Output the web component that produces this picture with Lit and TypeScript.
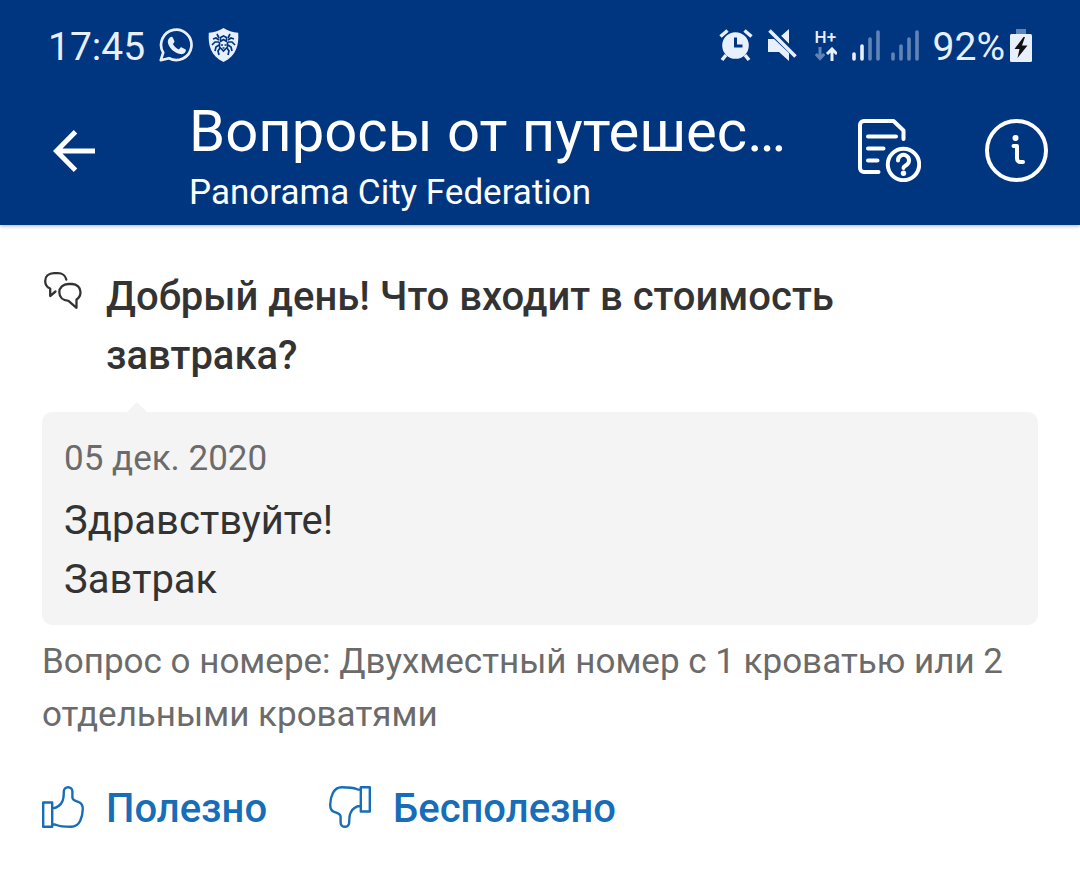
import { LitElement, html, css, svg } from "lit";
import { customElement, property, state } from "lit/decorators.js";
import { classMap } from "lit/directives/class-map.js";

@customElement("status-bar")
class StatusBar extends LitElement {
  static styles = css`
    :host {
      display: flex;
      justify-content: space-between;
      align-items: center;
      height: 90px;
      padding: 0 48px;
      box-sizing: border-box;
      color: #e8f0ff;
      font-size: 39px;
      line-height: 46px;
    }
    .group {
      display: flex;
      align-items: center;
    }
    .group span {
      padding-top: 4px;
    }
    svg {
      display: block;
      flex: none;
    }
    .left {
      gap: 14px;
    }
    .network {
      width: 24px;
      margin: 0 13px 0 17px;
      font-size: 17px;
      font-weight: 500;
      line-height: 15px;
    }
    .network svg {
      margin-top: 2px;
    }
    .mute {
      margin-left: 15px;
    }
    .signal {
      margin-right: 11px;
    }
    .level {
      margin: 0 5px 0 3px;
    }
  `;

  private bars(active: number) {
    const tops = [23, 15, 8, 1];
    return svg`${tops.map(
      (y, i) =>
        svg`<line x1=${2 + i * 8} x2=${2 + i * 8} y1=${y + 1} y2="29" stroke="currentColor" stroke-width="3.6" stroke-linecap="round" opacity=${i < active ? 1 : 0.42} />`
    )}`;
  }

  render() {
    return html`
      <div class="group left">
        <span>17:45</span>
        <svg width="35" height="34" viewBox="0 0 35 34" fill="none">
          <path d="M1.8 32.2 4.2 24.6A15.2 15.2 0 1 1 10 30.2Z" stroke="currentColor" stroke-width="2.7" stroke-linejoin="round" />
          <path d="M11.2 9.3c.8-.8 2-.8 2.5.1l1.7 3.6c.3.8-.1 1.4-1.5 2.9 1.4 2.6 3.4 4.4 6 5.5 1.6-1.9 2-2.4 2.9-2l3.5 1.8c.7.4.7 1.2.3 2.2-.9 2.2-3.2 3.1-5.3 2.7-6.3-1.2-11.2-6-12.4-11.3-.4-2.1.5-4 2.3-5.5Z" fill="currentColor" />
        </svg>
        <svg width="31" height="34" viewBox="0 0 31 34">
          <path d="M15.500 0c4 2.700 9 4.200 14.700 4.700C31 17 28.500 27.500 15.500 34 2.500 27.500 0 17 .8 4.700 6.500 4.200 11.500 2.700 15.500 0Z" fill="currentColor" />
          <g fill="none" stroke="#003580" stroke-width="1.700">
            <path d="M11 12 8 10 5 11M11 14 7 14 4 17M11 17 8 19 7 23M12 20 10 23 11 27M20 12l3-2 3 1M20 14l4 0 3 3M20 17l3 2 1 4M19 20l2 3-1 4M11 10 9 6M20 10l2-4" />
            <path d="M12.500 9.500 15.500 8l3 1.500v4l-3-2-3 2ZM11.500 14v5l4 4 4-4v-5" />
            <path d="M13 17h2M16.500 17h2M14.500 20h2" />
          </g>
        </svg>
      </div>
      <div class="group">
        <svg width="34" height="33" viewBox="0 0 34 33">
          <circle cx="16.500" cy="16.500" r="13.300" fill="currentColor" />
          <g stroke="currentColor" stroke-width="3.500" fill="none">
            <path d="M1.500 7.500 8.500 1.500M25.500 1.500l7 6M7 26l-4 5M26 26l4 5" />
          </g>
          <path d="M16.500 8.500v8.500h7" fill="none" stroke="#003580" stroke-width="3" />
        </svg>
        <svg class="mute" width="30" height="33" viewBox="0 0 30 33">
          <path d="M0 10h6l15 14v8L11 23H0ZM21 0v15l-8-8Z" fill="currentColor" />
          <path d="M5 1 29 25" stroke="#003580" stroke-width="3" />
          <path d="M1.500 1.500 27.500 27.500" stroke="currentColor" stroke-width="3.500" />
        </svg>
        <div class="network">
          H+
          <svg width="22" height="14" viewBox="0 0 22 14" fill="none" stroke="currentColor" stroke-width="3">
            <path d="M5 0v11M.8 7 5 11.500 9.200 7" opacity=".42" />
            <path d="M17 14V2.500M12 7l5-5 5 5" />
          </svg>
        </div>
        <svg class="signal" width="28" height="31" viewBox="0 0 28 31">${this.bars(2)}</svg>
        <svg class="signal" width="28" height="31" viewBox="0 0 28 31">${this.bars(0)}</svg>
        <span class="level">92%</span>
        <svg width="22" height="33" viewBox="0 0 22 33">
          <path d="M6 0h10v5H6Z" fill="currentColor" opacity=".42" />
          <rect y="5" width="22" height="28" rx="1.500" fill="currentColor" />
          <path d="M13.500 8 4.500 20h5L7.500 29 17.500 16.500h-5.500L15 8Z" fill="#111" />
        </svg>
      </div>
    `;
  }
}

@customElement("app-bar")
class AppBar extends LitElement {
  @property() heading = "";
  @property() subheading = "";

  static styles = css`
    :host {
      display: flex;
      align-items: center;
      height: 135px;
      padding: 0 32px 0 53px;
      box-sizing: border-box;
    }
    button {
      flex: none;
      display: block;
      margin: 0;
      padding: 0;
      border: 0;
      background: none;
      color: inherit;
      cursor: pointer;
    }
    svg {
      display: block;
      fill: none;
      stroke: currentColor;
      stroke-width: 4;
      stroke-linecap: round;
      stroke-linejoin: round;
    }
    .back,
    .actions {
      margin-bottom: 14px;
    }
    .back svg {
      stroke-width: 5;
      stroke-linecap: butt;
      stroke-linejoin: miter;
    }
    .titles {
      flex: 1;
      min-width: 0;
      margin: 0 58px 0 94px;
    }
    h1,
    p {
      margin: 0;
      font-weight: 400;
      white-space: nowrap;
      overflow: hidden;
      text-overflow: ellipsis;
    }
    h1 {
      font-size: 58px;
      line-height: 70px;
    }
    p {
      font-size: 35px;
      line-height: 54px;
    }
    .actions {
      display: flex;
      gap: 64px;
    }
    .dot {
      fill: currentColor;
      stroke: none;
    }
  `;

  render() {
    return html`
      <button class="back" aria-label="Назад">
        <svg width="42" height="42" viewBox="0 0 42 42">
          <path d="M22.500 1.800 3.500 21l19 19.200M3 21h39" />
        </svg>
      </button>
      <div class="titles">
        <h1>${this.heading}</h1>
        <p>${this.subheading}</p>
      </div>
      <div class="actions">
        <button aria-label="Правила">
          <svg width="63" height="63" viewBox="0 0 63 63">
            <path d="M20.500 53H6a4 4 0 0 1-4-4V6a4 4 0 0 1 4-4h29.500l10 9.500V20M10 17.500h28M10 29.500h15.500M10 41.500h9.500" />
            <circle cx="45.500" cy="45.500" r="15.700" />
            <path d="M40 41.500a5.500 5.500 0 1 1 8.500 4.500c-2 1.300-3 1.500-3 3" />
            <circle class="dot" cx="45.500" cy="54.300" r="2.700" />
          </svg>
        </button>
        <button aria-label="Информация">
          <svg width="63" height="63" viewBox="0 0 63 63">
            <circle cx="31.500" cy="31.500" r="29.500" />
            <path d="M28.500 27h3.500v12.500a3.500 3.500 0 0 0 3.500 3.500h2.500" />
            <circle class="dot" cx="30.500" cy="19" r="3" />
          </svg>
        </button>
      </div>
    `;
  }
}

@customElement("app-root")
class AppRoot extends LitElement {
  @state() private vote: "" | "up" | "down" = "";

  static styles = css`
    :host {
      display: block;
      min-height: 100vh;
      background: #fff;
      color: #333;
      font-family: Roboto, sans-serif;
    }
    header {
      background: #003580;
      color: #fff;
      box-shadow: 0 1px 4px rgba(0, 0, 0, 0.3);
    }
    main {
      padding: 42px;
    }
    svg {
      display: block;
      flex: none;
      fill: none;
      stroke: currentColor;
      stroke-linejoin: round;
    }
    .question {
      display: flex;
      align-items: flex-start;
      gap: 24px;
      padding: 0 22px 0 2px;
    }
    .question svg {
      margin-top: 5px;
      stroke-width: 2.3;
    }
    h2 {
      margin: 0;
      font-size: 40px;
      font-weight: 500;
      line-height: 59px;
    }
    .answer {
      position: relative;
      margin-top: 27px;
      padding: 20px 22px 16px;
      border-radius: 10px;
      background: #f4f4f4;
    }
    .answer::before {
      content: "";
      position: absolute;
      left: 85px;
      top: -10px;
      border: solid transparent;
      border-width: 0 10px 10px;
      border-bottom-color: #f4f4f4;
    }
    .answer p,
    .room {
      margin: 0;
    }
    time,
    .room {
      display: block;
      color: #6b6b6b;
      font-size: 35px;
      line-height: 53px;
    }
    time {
      margin-bottom: 6px;
    }
    .answer p {
      font-size: 40px;
      line-height: 59px;
    }
    .room {
      margin-top: 10px;
    }
    .votes {
      display: flex;
      gap: 62px;
      margin-top: 34px;
    }
    .vote {
      display: flex;
      align-items: center;
      gap: 22px;
      margin: 0;
      padding: 0;
      border: 0;
      background: none;
      color: #176db8;
      font: 500 40px/59px Roboto, sans-serif;
      cursor: pointer;
    }
    .vote span {
      padding-top: 4px;
    }
    .vote svg {
      stroke-width: 2.4;
    }
    .chosen {
      color: #003580;
    }
  `;

  private thumb(down: boolean) {
    return html`<svg width="42" height="42" viewBox="0 0 42 42">
      <g transform=${down ? "rotate(180 21 21)" : ""}>
        <path d="M1.200 16.500h9v24.300h-9ZM10.200 22.500C16 21.500 19 18.500 20.300 15.500c1.500-3 1.400-6 1.500-10 .1-2.600 2-4.300 4.300-4.300s4.300 1.700 4.300 4.300v6c0 3 3.200 3.500 6.400 4.600 3.300 1.300 4 4 4 7-.1 4.900-.9 8.400-2.700 11.900-2 4-5.100 5.800-9.100 5.800-8.500 0-11.500-.4-14.500-1.800-1.500-.7-2.500-.8-4.300-.8" />
      </g>
    </svg>`;
  }

  private voteButton(kind: "up" | "down", label: string) {
    return html`<button
      class=${classMap({ vote: true, chosen: this.vote === kind })}
      aria-pressed=${this.vote === kind}
      @click=${() => (this.vote = this.vote === kind ? "" : kind)}
    >
      ${this.thumb(kind === "down")}<span>${label}</span>
    </button>`;
  }

  render() {
    return html`
      <header>
        <status-bar></status-bar>
        <app-bar heading="Вопросы от путешественников" subheading="Panorama City Federation"></app-bar>
      </header>
      <main>
        <div class="question">
          <svg width="38" height="38" viewBox="0 0 38 38">
            <path d="M22.300 7.500C21.500 3.500 18 1.200 14 1.200H10C4.500 1.200 1.200 4.500 1.200 9c0 4 1.800 6.300 5 7.500v7.500l5.300-4.500" stroke-linecap="round" />
            <path d="M24.500 12h3.500c5 0 8.500 3.500 8.500 8 0 3.800-1.500 6-4 7.500v8.300L24.500 28.800C18.800 28.500 15.300 25 15.300 20.300c0-4.800 3.700-8.300 9.200-8.300Z" />
          </svg>
          <h2>Добрый день! Что входит в стоимость завтрака?</h2>
        </div>
        <article class="answer">
          <time datetime="2020-12-05">05 дек. 2020</time>
          <p>Здравствуйте!<br />Завтрак</p>
        </article>
        <p class="room">Вопрос о номере: Двухместный номер с 1 кроватью или 2 отдельными кроватями</p>
        <div class="votes">
          ${this.voteButton("up", "Полезно")} ${this.voteButton("down", "Бесполезно")}
        </div>
      </main>
    `;
  }
}
